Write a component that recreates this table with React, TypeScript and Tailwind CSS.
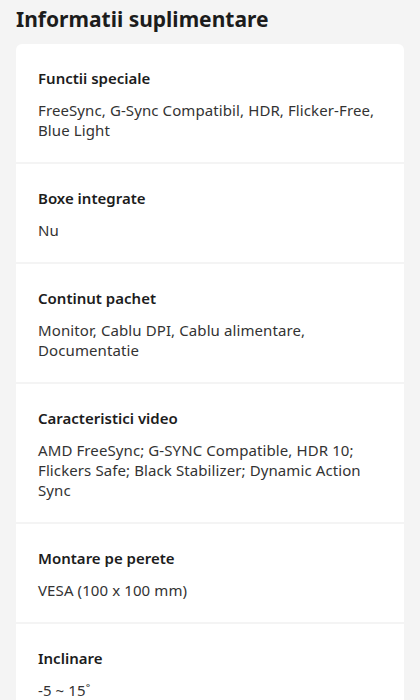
const rows = [
  { label: "Functii speciale", value: "FreeSync, G-Sync Compatibil, HDR, Flicker-Free, Blue Light" },
  { label: "Boxe integrate", value: "Nu" },
  { label: "Continut pachet", value: "Monitor, Cablu DPI, Cablu alimentare, Documentatie" },
  {
    label: "Caracteristici video",
    value: "AMD FreeSync; G-SYNC Compatible, HDR 10; Flickers Safe; Black Stabilizer; Dynamic Action Sync",
  },
  { label: "Montare pe perete", value: "VESA (100 x 100 mm)" },
  { label: "Inclinare", value: "-5 ~ 15˚" },
];

export default function App() {
  return (
    <div
      className="min-h-screen bg-[#f4f4f4] px-4 pt-[4px] text-[#1c1c1c]"
      style={{ fontFamily: '"Noto Sans", "Open Sans", sans-serif' }}
    >
      <h2 className="text-[21px] font-bold leading-[30px]">Informatii suplimentare</h2>

      {/* Lista specificatii */}
      <div className="mt-[10px] flex flex-col gap-[2px] overflow-hidden rounded-md">
        {rows.map((row) => (
          <div key={row.label} className="bg-white pl-[22px] pr-4 pt-6 pb-[22px]">
            <div className="text-[15px] font-semibold leading-5">{row.label}</div>
            <div className="mt-3 text-[15px] leading-5 tracking-[0.1px] text-[#333]">{row.value}</div>
          </div>
        ))}
      </div>
    </div>
  );
}
